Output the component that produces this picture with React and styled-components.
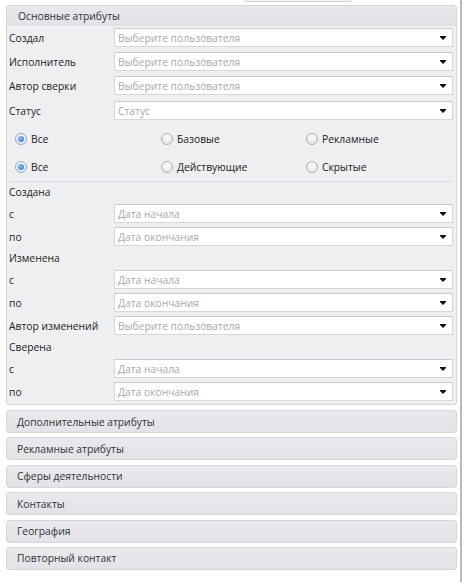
import React from "react";
import styled, { createGlobalStyle } from "styled-components";

const GlobalStyle = createGlobalStyle`
  body {
    margin: 0;
    background: #ffffff;
    font-family: "Open Sans", "Noto Sans", sans-serif;
    font-size: 10.3px;
    color: #222;
  }
`;

const Page = styled.div`
  box-sizing: border-box;
  width: 462px;
  height: 582px;
  border-right: 2px solid #b9babd;
  padding: 0 3px 0 6px;
  display: flex;
  flex-direction: column;
`;

const TopStrip = styled.div`
  height: 5px;
  display: flex;
`;

const TabStub = styled.div`
  margin-left: 239px;
  width: 104px;
  height: 1px;
  background: #f3f3f4;
  border-bottom: 1px solid #cfd0d3;
  border-left: 1px solid #cfd0d3;
  border-right: 1px solid #cfd0d3;
`;

const Group = styled.div`
  border: 1px solid #d3d4d7;
  border-radius: 3px;
  background: #eeeff1;
  padding: 0 3px 1px 2px;
`;

const GroupHeader = styled.div`
  height: 20px;
  margin: 0 -3px 0 -2px;
  padding-left: 11px;
  display: flex;
  align-items: center;
  background: linear-gradient(#e8e9ec, #e1e2e5);
  color: #333;
`;

const Row = styled.div`
  display: grid;
  grid-template-columns: 105px 1fr;
  align-items: start;
  height: ${({ $h }) => $h || 23}px;
  padding-top: ${({ $pt }) => ($pt === undefined ? 2 : $pt)}px;
  box-sizing: border-box;
`;

const Label = styled.div`
  height: 19px;
  display: flex;
  align-items: center;
  color: #1e1e1e;
  white-space: nowrap;
`;

const SectionLabel = styled.div`
  height: 20px;
  display: flex;
  align-items: center;
  color: #1e1e1e;
`;

const Input = styled.div`
  position: relative;
  box-sizing: border-box;
  height: 19px;
  background: #fff;
  border: 1px solid #d6d7da;
  border-top-color: #c9cacd;
  display: flex;
  align-items: center;
  padding-left: 3px;
  color: #a9a9ab;
`;

const Arrow = styled.span`
  position: absolute;
  right: 6px;
  top: 8px;
  width: 0;
  height: 0;
  border-left: 3px solid transparent;
  border-right: 3px solid transparent;
  border-top: 3px solid #111;
  &::before {
    content: "";
    position: absolute;
    left: -3px;
    top: -4px;
    width: 6px;
    height: 1px;
    background: #111;
  }
`;

const RadioBlock = styled.div`
  border-bottom: 1px solid #dcdde0;
  margin-top: 1px;
`;

const RadioRow = styled.div`
  display: grid;
  grid-template-columns: 146px 145px 1fr;
  height: 28px;
  align-items: center;
  padding-left: 6px;
`;

const RadioItem = styled.div`
  display: flex;
  align-items: center;
  gap: 4px;
  color: #222;
`;

const Circle = styled.span`
  box-sizing: border-box;
  width: 12px;
  height: 12px;
  border-radius: 50%;
  border: 1px solid ${({ $on }) => ($on ? "#8fa9cf" : "#b0b1b4")};
  background: radial-gradient(circle at 50% 35%, #ffffff, #dcdde0);
  display: flex;
  align-items: center;
  justify-content: center;
  &::after {
    content: "";
    display: ${({ $on }) => ($on ? "block" : "none")};
    width: 6px;
    height: 6px;
    border-radius: 50%;
    background: radial-gradient(circle at 40% 35%, #8fc0f5, #2b63c6);
  }
`;

const Collapsed = styled.div`
  display: flex;
  flex-direction: column;
  gap: 4.4px;
  margin-top: 5px;
`;

const CollapsedHeader = styled.div`
  box-sizing: border-box;
  height: 23px;
  border: 1px solid #d5d6d9;
  border-radius: 3px;
  background: linear-gradient(#e9eaed, #e2e3e6);
  display: flex;
  align-items: center;
  padding-left: 10px;
  color: #333;
`;

const Field = ({ label, placeholder, h, pt }) => (
  <Row $h={h} $pt={pt}>
    <Label>{label}</Label>
    <Input>
      {placeholder}
      <Arrow />
    </Input>
  </Row>
);

const Radio = ({ on, children }) => (
  <RadioItem>
    <Circle $on={on} />
    {children}
  </RadioItem>
);

const USER = "Выберите пользователя";
const START = "Дата начала";
const END = "Дата окончания";

const sections = [
  "Дополнительные атрибуты",
  "Рекламные атрибуты",
  "Сферы деятельности",
  "Контакты",
  "География",
  "Повторный контакт",
];

export default function App() {
  return (
    <>
      <GlobalStyle />
      <Page>
        <TopStrip>
          <TabStub />
        </TopStrip>
        <Group>
          <GroupHeader>Основные атрибуты</GroupHeader>
          <Field label="Создал" placeholder={USER} h={24} />
          <Field label="Исполнитель" placeholder={USER} h={24} />
          <Field label="Автор сверки" placeholder={USER} h={24} />
          <Field label="Статус" placeholder="Статус" h={26} pt={3} />
          <RadioBlock>
            <RadioRow>
              <Radio on>Все</Radio>
              <Radio>Базовые</Radio>
              <Radio>Рекламные</Radio>
            </RadioRow>
            <RadioRow>
              <Radio on>Все</Radio>
              <Radio>Действующие</Radio>
              <Radio>Скрытые</Radio>
            </RadioRow>
          </RadioBlock>
          <SectionLabel>Создана</SectionLabel>
          <Field label="с" placeholder={START} />
          <Field label="по" placeholder={END} />
          <SectionLabel>Изменена</SectionLabel>
          <Field label="с" placeholder={START} />
          <Field label="по" placeholder={END} />
          <Field label="Автор изменений" placeholder={USER} />
          <SectionLabel>Сверена</SectionLabel>
          <Field label="с" placeholder={START} />
          <Field label="по" placeholder={END} />
        </Group>
        <Collapsed>
          {sections.map((s) => (
            <CollapsedHeader key={s}>{s}</CollapsedHeader>
          ))}
        </Collapsed>
      </Page>
    </>
  );
}
